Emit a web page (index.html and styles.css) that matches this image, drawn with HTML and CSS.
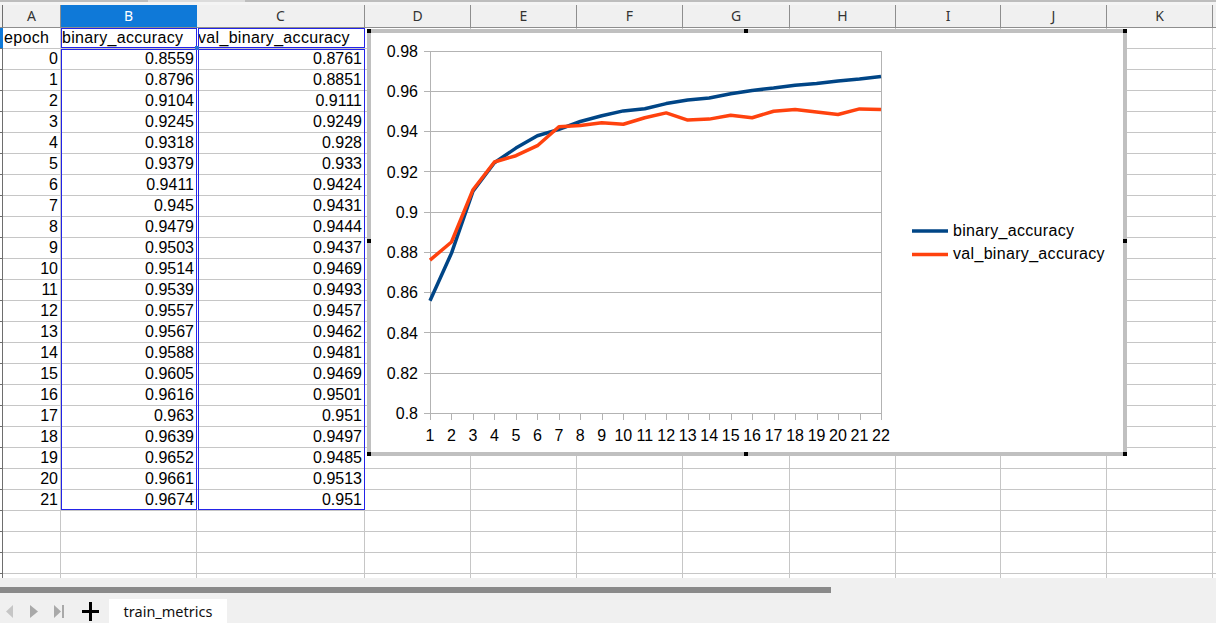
FILE: index.html
```html
<!DOCTYPE html>
<html>
<head>
<meta charset="utf-8">
<link rel="stylesheet" href="styles.css">
</head>
<body>
<div class="app">
  <div class="topstrip"><div class="ts-a"></div><div class="ts-b"></div><div class="ts-c"></div></div>
  <div class="colhead">
    <div class="h edge"></div>
    <div class="h">A</div>
    <div class="h sel">B</div>
    <div class="h">C</div>
    <div class="h">D</div>
    <div class="h">E</div>
    <div class="h">F</div>
    <div class="h">G</div>
    <div class="h">H</div>
    <div class="h">I</div>
    <div class="h">J</div>
    <div class="h">K</div>
    <div class="h last"></div>
  </div>
  <div class="sheet">
    <div class="row"><div class="rh sel"></div><div class="c t">epoch</div><div class="c t">binary_accuracy</div><div class="c t">val_binary_accuracy</div><div class="fill"></div></div>
    <div class="row"><div class="rh"></div><div class="c n">0</div><div class="c n">0.8559</div><div class="c n">0.8761</div><div class="fill"></div></div>
    <div class="row"><div class="rh"></div><div class="c n">1</div><div class="c n">0.8796</div><div class="c n">0.8851</div><div class="fill"></div></div>
    <div class="row"><div class="rh"></div><div class="c n">2</div><div class="c n">0.9104</div><div class="c n">0.9111</div><div class="fill"></div></div>
    <div class="row"><div class="rh"></div><div class="c n">3</div><div class="c n">0.9245</div><div class="c n">0.9249</div><div class="fill"></div></div>
    <div class="row"><div class="rh"></div><div class="c n">4</div><div class="c n">0.9318</div><div class="c n">0.928</div><div class="fill"></div></div>
    <div class="row"><div class="rh"></div><div class="c n">5</div><div class="c n">0.9379</div><div class="c n">0.933</div><div class="fill"></div></div>
    <div class="row"><div class="rh"></div><div class="c n">6</div><div class="c n">0.9411</div><div class="c n">0.9424</div><div class="fill"></div></div>
    <div class="row"><div class="rh"></div><div class="c n">7</div><div class="c n">0.945</div><div class="c n">0.9431</div><div class="fill"></div></div>
    <div class="row"><div class="rh"></div><div class="c n">8</div><div class="c n">0.9479</div><div class="c n">0.9444</div><div class="fill"></div></div>
    <div class="row"><div class="rh"></div><div class="c n">9</div><div class="c n">0.9503</div><div class="c n">0.9437</div><div class="fill"></div></div>
    <div class="row"><div class="rh"></div><div class="c n">10</div><div class="c n">0.9514</div><div class="c n">0.9469</div><div class="fill"></div></div>
    <div class="row"><div class="rh"></div><div class="c n">11</div><div class="c n">0.9539</div><div class="c n">0.9493</div><div class="fill"></div></div>
    <div class="row"><div class="rh"></div><div class="c n">12</div><div class="c n">0.9557</div><div class="c n">0.9457</div><div class="fill"></div></div>
    <div class="row"><div class="rh"></div><div class="c n">13</div><div class="c n">0.9567</div><div class="c n">0.9462</div><div class="fill"></div></div>
    <div class="row"><div class="rh"></div><div class="c n">14</div><div class="c n">0.9588</div><div class="c n">0.9481</div><div class="fill"></div></div>
    <div class="row"><div class="rh"></div><div class="c n">15</div><div class="c n">0.9605</div><div class="c n">0.9469</div><div class="fill"></div></div>
    <div class="row"><div class="rh"></div><div class="c n">16</div><div class="c n">0.9616</div><div class="c n">0.9501</div><div class="fill"></div></div>
    <div class="row"><div class="rh"></div><div class="c n">17</div><div class="c n">0.963</div><div class="c n">0.951</div><div class="fill"></div></div>
    <div class="row"><div class="rh"></div><div class="c n">18</div><div class="c n">0.9639</div><div class="c n">0.9497</div><div class="fill"></div></div>
    <div class="row"><div class="rh"></div><div class="c n">19</div><div class="c n">0.9652</div><div class="c n">0.9485</div><div class="fill"></div></div>
    <div class="row"><div class="rh"></div><div class="c n">20</div><div class="c n">0.9661</div><div class="c n">0.9513</div><div class="fill"></div></div>
    <div class="row"><div class="rh"></div><div class="c n">21</div><div class="c n">0.9674</div><div class="c n">0.951</div><div class="fill"></div></div>
    <div class="row"><div class="rh"></div><div class="c"></div><div class="c"></div><div class="c"></div><div class="fill"></div></div>
    <div class="row"><div class="rh"></div><div class="c"></div><div class="c"></div><div class="c"></div><div class="fill"></div></div>
    <div class="row"><div class="rh"></div><div class="c"></div><div class="c"></div><div class="c"></div><div class="fill"></div></div>
    <div class="row"><div class="rh"></div><div class="c"></div><div class="c"></div><div class="c"></div><div class="fill"></div></div>
  </div>

  <div class="bottombar">
    <div class="hscroll"><div class="thumb"></div></div>
    <div class="tabs">
      <svg class="nav" width="80" height="22" viewBox="0 0 80 22">
        <polygon points="13,6 13,19 6,12.5" fill="#c6c6c6"/>
        <polygon points="30,6 30,19 38,12.5" fill="#a9a9a9"/>
        <polygon points="54,6 54,19 61,12.5" fill="#a9a9a9"/>
        <rect x="62" y="6" width="2" height="13" fill="#a9a9a9"/>
      </svg>
      <svg class="plus" width="20" height="22" viewBox="0 0 20 22">
        <rect x="1" y="11" width="17" height="3" fill="#000"/>
        <rect x="8" y="3" width="3" height="19" fill="#000"/>
      </svg>
      <div class="tab">train_metrics</div>
    </div>
  </div>

  <!-- data range highlights -->
  <div class="rng r-b1"></div>
  <div class="rng r-c1"></div>
  <div class="rng r-b"></div>
  <div class="rng r-c"></div>
  <div class="rng-handle"></div>

  <!-- chart object -->
  <div class="chart">
    <svg class="chart-svg" width="752" height="420" viewBox="371 33 752 420">
      <g class="grid">
        <line x1="424" y1="51.5" x2="882" y2="51.5"/>
        <line x1="424" y1="91.5" x2="882" y2="91.5"/>
        <line x1="424" y1="131.5" x2="882" y2="131.5"/>
        <line x1="424" y1="171.5" x2="882" y2="171.5"/>
        <line x1="424" y1="212.5" x2="882" y2="212.5"/>
        <line x1="424" y1="252.5" x2="882" y2="252.5"/>
        <line x1="424" y1="292.5" x2="882" y2="292.5"/>
        <line x1="424" y1="332.5" x2="882" y2="332.5"/>
        <line x1="424" y1="373.5" x2="882" y2="373.5"/>
        <line x1="424" y1="413.5" x2="882" y2="413.5"/>
        <line x1="430.5" y1="51" x2="430.5" y2="420"/>
        <line x1="881.5" y1="51" x2="881.5" y2="420"/>
        <line x1="451.5" y1="413" x2="451.5" y2="420"/>
        <line x1="473.5" y1="413" x2="473.5" y2="420"/>
        <line x1="494.5" y1="413" x2="494.5" y2="420"/>
        <line x1="516.5" y1="413" x2="516.5" y2="420"/>
        <line x1="537.5" y1="413" x2="537.5" y2="420"/>
        <line x1="559.5" y1="413" x2="559.5" y2="420"/>
        <line x1="580.5" y1="413" x2="580.5" y2="420"/>
        <line x1="602.5" y1="413" x2="602.5" y2="420"/>
        <line x1="623.5" y1="413" x2="623.5" y2="420"/>
        <line x1="645.5" y1="413" x2="645.5" y2="420"/>
        <line x1="666.5" y1="413" x2="666.5" y2="420"/>
        <line x1="688.5" y1="413" x2="688.5" y2="420"/>
        <line x1="709.5" y1="413" x2="709.5" y2="420"/>
        <line x1="731.5" y1="413" x2="731.5" y2="420"/>
        <line x1="752.5" y1="413" x2="752.5" y2="420"/>
        <line x1="774.5" y1="413" x2="774.5" y2="420"/>
        <line x1="795.5" y1="413" x2="795.5" y2="420"/>
        <line x1="817.5" y1="413" x2="817.5" y2="420"/>
        <line x1="838.5" y1="413" x2="838.5" y2="420"/>
        <line x1="860.5" y1="413" x2="860.5" y2="420"/>
      </g>
      <g class="ax ylab">
        <text x="418" y="57">0.98</text>
        <text x="418" y="97">0.96</text>
        <text x="418" y="137">0.94</text>
        <text x="418" y="177.5">0.92</text>
        <text x="418" y="218">0.9</text>
        <text x="418" y="258">0.88</text>
        <text x="418" y="298">0.86</text>
        <text x="418" y="338.5">0.84</text>
        <text x="418" y="379">0.82</text>
        <text x="418" y="419">0.8</text>
      </g>
      <g class="ax xlab">
        <text x="430" y="441">1</text>
        <text x="451.5" y="441">2</text>
        <text x="473" y="441">3</text>
        <text x="494.4" y="441">4</text>
        <text x="515.9" y="441">5</text>
        <text x="537.4" y="441">6</text>
        <text x="558.9" y="441">7</text>
        <text x="580.3" y="441">8</text>
        <text x="601.8" y="441">9</text>
        <text x="623.3" y="441">10</text>
        <text x="644.8" y="441">11</text>
        <text x="666.2" y="441">12</text>
        <text x="687.7" y="441">13</text>
        <text x="709.2" y="441">14</text>
        <text x="730.7" y="441">15</text>
        <text x="752.1" y="441">16</text>
        <text x="773.6" y="441">17</text>
        <text x="795.1" y="441">18</text>
        <text x="816.6" y="441">19</text>
        <text x="838" y="441">20</text>
        <text x="859.5" y="441">21</text>
        <text x="881" y="441">22</text>
      </g>
      <polyline class="s1" points="430,300.8 451.5,253.1 473,191.1 494.4,162.8 515.9,148.1 537.4,135.8 558.9,129.4 580.3,121.5 601.8,115.7 623.3,110.9 644.8,108.7 666.2,103.6 687.7,100 709.2,98 730.7,93.8 752.1,90.4 773.6,88.1 795.1,85.3 816.6,83.5 838,80.9 859.5,79.1 881,76.5"/>
      <polyline class="s2" points="430,260.1 451.5,242 473,189.7 494.4,162 515.9,155.7 537.4,145.7 558.9,126.8 580.3,125.4 601.8,122.7 623.3,124.2 644.8,117.7 666.2,112.9 687.7,120.1 709.2,119.1 730.7,115.3 752.1,117.7 773.6,111.3 795.1,109.5 816.6,112.1 838,114.5 859.5,108.9 881,109.5"/>
      <line class="s1" x1="912" y1="231" x2="948" y2="231"/>
      <line class="s2" x1="912" y1="254.5" x2="948" y2="254.5"/>
      <text class="ax leg" x="953" y="235.5">binary_accuracy</text>
      <text class="ax leg" x="953" y="259">val_binary_accuracy</text>
    </svg>
  </div>
  <div class="hd" style="left:367px;top:29px"></div>
  <div class="hd" style="left:744px;top:29px"></div>
  <div class="hd" style="left:1123px;top:29px"></div>
  <div class="hd" style="left:367px;top:239px"></div>
  <div class="hd" style="left:1123px;top:239px"></div>
  <div class="hd" style="left:367px;top:452px"></div>
  <div class="hd" style="left:744px;top:452px"></div>
  <div class="hd" style="left:1123px;top:452px"></div>
</div>
</body>
</html>
```

FILE: styles.css
```css
* { box-sizing: border-box; }
html, body { margin: 0; padding: 0; }
body {
  width: 1216px;
  height: 623px;
  overflow: hidden;
  background: #fff;
  font-family: "Liberation Sans", Arial, sans-serif;
}
.app {
  position: relative;
  width: 1216px;
  height: 623px;
  overflow: hidden;
  display: flex;
  flex-direction: column;
}

/* top strip */
.topstrip {
  height: 5px;
  display: flex;
  background: #f4f4f4;
}
.ts-a { width: 148px; border-top: 2px solid #bdbdbd; }
.ts-b { width: 97px; border-top: 2px solid #dcdcdc; }
.ts-c { flex: 1; border-top: 2px solid #bdbdbd; }

/* column header */
.colhead {
  height: 23px;
  display: grid;
  grid-template-columns: 3px 58px 136px 168px 106px 106px 106px 107px 106px 105px 106px 106px 1fr;
}
.h {
  background: #f0f0f0;
  border-right: 1px solid #8e8e8e;
  border-bottom: 1px solid #8e8e8e;
  text-align: center;
  font: 14px "Noto Sans", "Liberation Sans", sans-serif;
  line-height: 22px;
  color: #333;
}
.h.edge { border-right: 1px solid #6e6e6e; }
.h.sel { background: #0f79d8; color: #fff; border-right-color: #0f79d8; }
.h.last { border-right: none; }

/* sheet body */
.sheet {
  height: 552px;
  overflow: hidden;
}
.row {
  height: 21px;
  display: grid;
  grid-template-columns: 3px 58px 136px 168px 1fr;
}
.rh {
  border-right: 1px solid #6e6e6e;
  border-bottom: 1px solid #6e6e6e;
}
.rh.sel { background: #0f79d8; border-right-color: #0f79d8; }
.c {
  border-right: 1px solid #c6c6c6;
  border-bottom: 1px solid #c6c6c6;
  padding: 0 2px 0 1px;
  font-size: 16px;
  line-height: 20px;
  color: #000;
  white-space: nowrap;
  overflow: hidden;
}
.c.t { letter-spacing: 0.32px; }
.c.n { text-align: right; }
.fill {
  border-bottom: 1px solid #c6c6c6;
  background-image: linear-gradient(to right,
    transparent 0 105px, #c6c6c6 105px 106px,
    transparent 106px 211px, #c6c6c6 211px 212px,
    transparent 212px 317px, #c6c6c6 317px 318px,
    transparent 318px 424px, #c6c6c6 424px 425px,
    transparent 425px 530px, #c6c6c6 530px 531px,
    transparent 531px 635px, #c6c6c6 635px 636px,
    transparent 636px 741px, #c6c6c6 741px 742px,
    transparent 742px 847px, #c6c6c6 847px 848px,
    transparent 848px);
}

/* bottom bar */
.bottombar {
  flex: 1;
  background: #f0f0f0;
  display: flex;
  flex-direction: column;
}
.hscroll {
  height: 21px;
  padding-top: 9px;
}
.thumb {
  width: 831px;
  height: 6px;
  background: #8a8a8a;
}
.tabs {
  flex: 1;
  display: flex;
  align-items: flex-start;
}
.nav { display: block; flex: none; }
.plus { display: block; flex: none; margin-left: 1px; }
.tab {
  margin-left: 8px;
  width: 118px;
  height: 24px;
  background: #fff;
  text-align: center;
  font: 14.5px "Noto Sans", "Liberation Sans", sans-serif;
  line-height: 24px;
  color: #111;
}

/* range highlights */
.rng {
  position: absolute;
  border: 1px solid #2323e8;
}
.r-b1 { left: 61px; top: 28px; width: 136px; height: 20px; }
.r-c1 { left: 198px; top: 28px; width: 167px; height: 20px; }
.r-b { left: 61px; top: 49px; width: 136px; height: 461px; }
.r-c { left: 198px; top: 49px; width: 167px; height: 461px; }
.rng-handle {
  position: absolute;
  left: 195px; top: 46px;
  width: 4px; height: 4px;
  background: #2a6fd6;
}

/* chart */
.chart {
  position: absolute;
  left: 367px;
  top: 29px;
  width: 760px;
  height: 427px;
  border: 4px solid #c0c0c0;
  background: #fff;
}
.chart-svg { display: block; }
.grid line { stroke: #b3b3b3; stroke-width: 1; }
.ax {
  font-family: "Liberation Sans", Arial, sans-serif;
  font-size: 16px;
  fill: #000;
}
.leg { letter-spacing: 0.32px; }
.ylab text { text-anchor: end; }
.xlab text { text-anchor: middle; }
.s1 { fill: none; stroke: #004586; stroke-width: 3.5; stroke-linejoin: round; }
.s2 { fill: none; stroke: #ff420e; stroke-width: 3.5; stroke-linejoin: round; }
.hd {
  position: absolute;
  width: 4px;
  height: 4px;
  background: #000;
}
```
